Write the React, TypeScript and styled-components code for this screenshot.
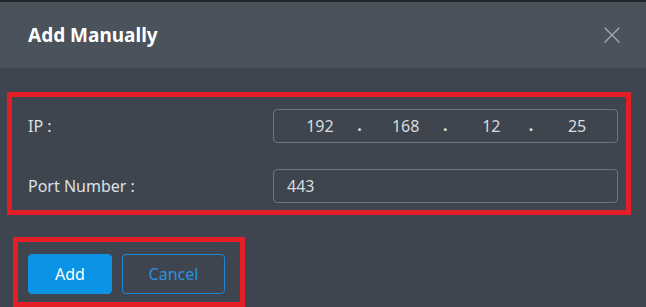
import styled, { createGlobalStyle } from "styled-components";

const GlobalStyle = createGlobalStyle`
  html, body {
    margin: 0;
    padding: 0;
    background: #3e454e;
  }
  body {
    font-family: "Noto Sans", "Open Sans", sans-serif;
  }
`;

const octets = ["192", "168", "12", "25"];

const CloseIcon = () => (
  <svg width="16" height="16" viewBox="0 0 16 16" fill="none">
    <path d="M1 1 L15 15 M15 1 L1 15" stroke="#a3a9af" strokeWidth="1.4" strokeLinecap="round" />
  </svg>
);

const App = () => {
  return (
    <>
      <GlobalStyle />
      <Dialog>
        <Header>
          <Title>Add Manually</Title>
          <CloseButton aria-label="close">
            <CloseIcon />
          </CloseButton>
        </Header>
        <Body>
          <FieldGroup>
            <Row>
              <Label>IP :</Label>
              <IpBox>
                {octets.map((item, index) => (
                  <Octet key={index} $last={index === octets.length - 1}>
                    {item}
                  </Octet>
                ))}
              </IpBox>
            </Row>
            <Row>
              <Label>Port Number :</Label>
              <TextInput defaultValue="443" />
            </Row>
          </FieldGroup>
          <Footer>
            <Button $primary>Add</Button>
            <Button>Cancel</Button>
          </Footer>
        </Body>
      </Dialog>
    </>
  );
};

export default App;

const Dialog = styled.div`
  width: 646px;
  height: 307px;
  overflow: hidden;
  display: flex;
  flex-direction: column;
  background: #3e454e;
`;

const Header = styled.header`
  height: 66px;
  border-top: 2px solid #22262b;
  background: #4a525b;
  display: flex;
  align-items: center;
  justify-content: space-between;
  padding: 0 26px 0 28px;
`;

const Title = styled.h2`
  margin: 0;
  font-size: 19px;
  font-weight: 700;
  color: #ffffff;
`;

const CloseButton = styled.button`
  border: none;
  background: transparent;
  padding: 0;
  display: flex;
  cursor: pointer;
`;

const Body = styled.div`
  padding: 24px 15px 0 7px;
`;

const Highlight = styled.div`
  border: 5px solid #e31e27;
`;

const FieldGroup = styled(Highlight)`
  display: grid;
  gap: 26px;
  padding: 12px 8px 7px 16px;
`;

const Row = styled.div`
  display: flex;
  align-items: center;
  justify-content: space-between;
`;

const Label = styled.label`
  font-size: 16px;
  color: #dde1e4;
`;

const IpBox = styled.div`
  width: 345px;
  height: 34px;
  box-sizing: border-box;
  border: 1px solid #6c737b;
  border-radius: 4px;
  display: grid;
  grid-template-columns: repeat(4, 1fr);
  align-items: center;
`;

const Octet = styled.span<{ $last?: boolean }>`
  position: relative;
  text-align: center;
  font-size: 16px;
  color: #d9dcdf;
  padding-left: 6px;

  &::after {
    content: ${(p) => (p.$last ? "none" : '"."')};
    position: absolute;
    right: -2px;
    top: -1px;
    font-weight: 700;
    color: #d9dcdf;
  }
`;

const TextInput = styled.input`
  width: 345px;
  height: 34px;
  box-sizing: border-box;
  border: 1px solid #6c737b;
  border-radius: 4px;
  background: transparent;
  padding: 0 13px;
  font-family: inherit;
  font-size: 16px;
  color: #d9dcdf;
  outline: none;
`;

const Footer = styled(Highlight)`
  width: 232px;
  box-sizing: border-box;
  margin: 22px 0 0 6px;
  padding: 12px 15px 8px 10px;
  display: flex;
  gap: 10px;
`;

const Button = styled.button<{ $primary?: boolean }>`
  height: 40px;
  width: ${(p) => (p.$primary ? "84px" : "103px")};
  border-radius: 4px;
  border: 1px solid ${(p) => (p.$primary ? "#0b93e6" : "#1f86d6")};
  background: ${(p) => (p.$primary ? "#0b93e6" : "transparent")};
  color: ${(p) => (p.$primary ? "#ffffff" : "#2c8fe0")};
  font-family: inherit;
  font-size: 16px;
  cursor: pointer;
`;
